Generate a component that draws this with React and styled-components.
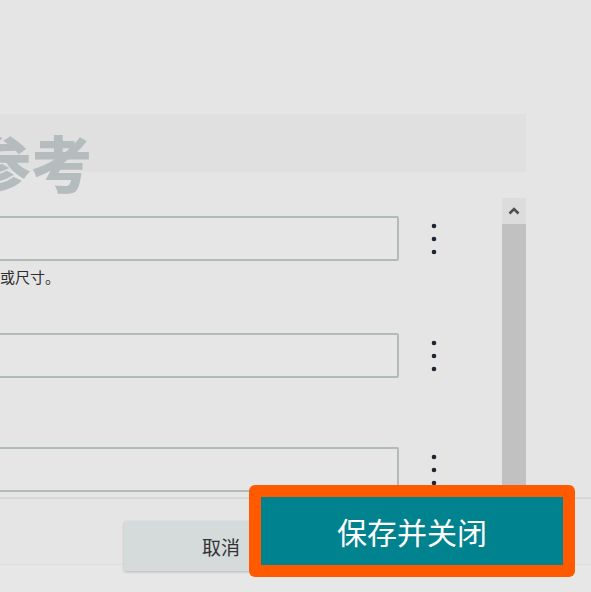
import styled, { createGlobalStyle } from "styled-components";

const GlobalStyle = createGlobalStyle`
  html, body {
    margin: 0;
    padding: 0;
    background: #e5e5e5;
  }
  body {
    font-family: "Noto Sans CJK SC", "Noto Sans", sans-serif;
  }
`;

// Campos do formulário (a parte esquerda fica cortada)
const fields = [
  { id: 1, hint: "指定宽度或尺寸。", height: 117 },
  { id: 2, hint: "", height: 114 },
  { id: 3, hint: "", height: 114 },
];

function Kebab() {
  return (
    <KebabBox>
      <svg width="6" height="32" viewBox="0 0 6 32">
        <circle cx="3" cy="3" r="2.3" fill="#1d2630" />
        <circle cx="3" cy="16" r="2.3" fill="#1d2630" />
        <circle cx="3" cy="29" r="2.3" fill="#1d2630" />
      </svg>
    </KebabBox>
  );
}

export default function App() {
  return (
    <>
      <GlobalStyle />
      <Page>
        <TitleBand>
          <Title>参考</Title>
        </TitleBand>

        <Body>
          <Fields>
            {fields.map((field) => (
              <Field key={field.id} $height={field.height}>
                <FieldRow>
                  <Input />
                  <Kebab />
                </FieldRow>
                {field.hint && <Hint>{field.hint}</Hint>}
              </Field>
            ))}
          </Fields>
          <Scrollbar>
            <ScrollArrow>
              <svg width="12" height="8" viewBox="0 0 12 8">
                <path d="M1.5 6.5 L6 2 L10.5 6.5" fill="none" stroke="#4a4f52" strokeWidth="2.6" />
              </svg>
            </ScrollArrow>
            <ScrollThumb />
          </Scrollbar>
        </Body>

        <Footer>
          <CancelButton>取消</CancelButton>
          <Highlight>
            <SaveButton>保存并关闭</SaveButton>
          </Highlight>
        </Footer>
      </Page>
    </>
  );
}

const Page = styled.div`
  width: 591px;
  height: 592px;
  overflow: hidden;
  padding-top: 114px;
  box-sizing: border-box;
  background: #e5e5e5;
`;

const TitleBand = styled.div`
  width: 526px;
  height: 58px;
  background: #e0e0e0;
  padding-top: 17px;
  box-sizing: border-box;
`;

const Title = styled.h1`
  margin: 0 0 0 -30px;
  font-size: 61px;
  line-height: 1;
  font-weight: 900;
  color: #b4bcbd;
  white-space: nowrap;
`;

const Body = styled.div`
  display: flex;
  align-items: flex-start;
  margin-top: 26px;
  height: 299px;
`;

const Fields = styled.div`
  display: flex;
  flex-direction: column;
  margin-left: -60px;
  padding-top: 18px;
  width: 506px;
`;

const Field = styled.div`
  height: ${(p) => p.$height}px;
  flex-shrink: 0;
`;

const FieldRow = styled.div`
  display: flex;
  align-items: center;
  gap: 23px;
`;

const Input = styled.div`
  width: 459px;
  height: 45px;
  border: 2px solid #b2bbbb;
  border-radius: 2px;
  box-sizing: border-box;
  background: #e6e6e6;
`;

const KebabBox = styled.div`
  width: 24px;
  display: flex;
  justify-content: center;

  svg {
    display: block;
  }
`;

const Hint = styled.p`
  margin: 5px 0 0;
  font-size: 15px;
  line-height: 21px;
  color: #2e2e2e;
  white-space: nowrap;
`;

const Scrollbar = styled.div`
  width: 24px;
  margin-left: 56px;
  height: 299px;
  display: flex;
  flex-direction: column;
`;

const ScrollArrow = styled.div`
  height: 26px;
  background: #dcdcdc;
  display: flex;
  align-items: center;
  justify-content: center;
`;

const ScrollThumb = styled.div`
  flex: 1;
  background: #c1c1c1;
`;

const Footer = styled.div`
  display: flex;
  align-items: flex-start;
  height: 95px;
  padding-left: 124px;
  border-top: 1px solid #dadada;
  box-shadow: inset 0 1px 0 #d6d6d6;
  background: linear-gradient(#e5e5e5 0, #e5e5e5 66px, #dedede 66px, #dedede 67px, #e7e7e7 67px);
  position: relative;
`;

const CancelButton = styled.button`
  margin-top: 23px;
  width: 130px;
  height: 50px;
  border: none;
  border-radius: 2px;
  background: #d5dbdb;
  box-shadow: 0 1px 3px rgba(0, 0, 0, 0.2);
  font-family: inherit;
  font-size: 19px;
  color: #333;
  text-align: left;
  padding-left: 78px;
`;

const Highlight = styled.div`
  margin-top: -13px;
  margin-left: -5px;
  padding: 12px;
  background: #ff5a00;
  border-radius: 6px;
  position: relative;
`;

const SaveButton = styled.button`
  display: block;
  width: 302px;
  height: 68px;
  border: none;
  background: #00838f;
  color: #ffffff;
  font-family: inherit;
  font-size: 30px;
  padding: 0;
`;
